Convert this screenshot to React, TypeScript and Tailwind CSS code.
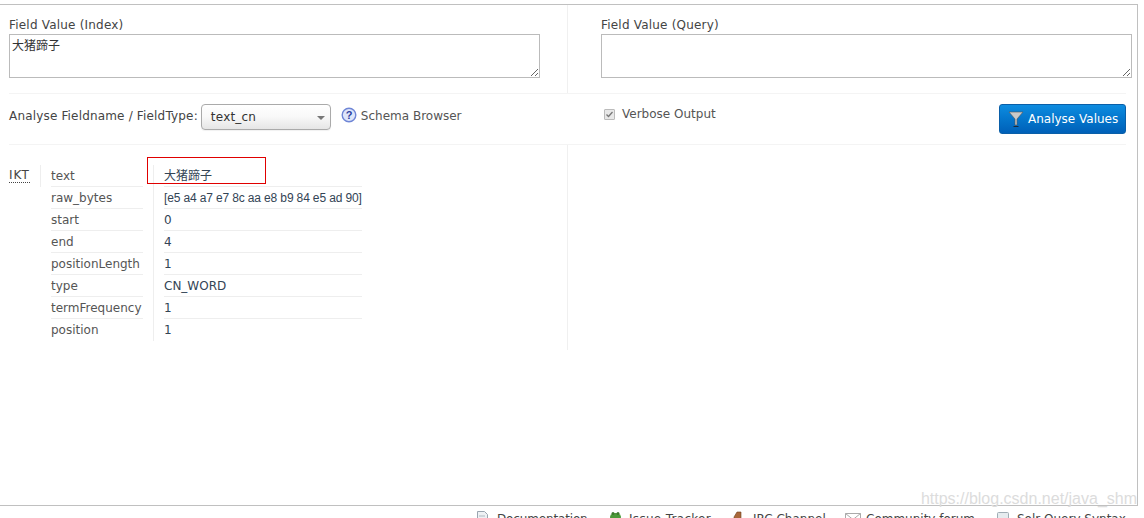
import React from "react";

const font = "font-['DejaVu_Sans','Noto_Sans_CJK_SC',sans-serif]";

const rows: [string, string][] = [
  ["text", "大猪蹄子"],
  ["raw_bytes", "[e5 a4 a7 e7 8c aa e8 b9 84 e5 ad 90]"],
  ["start", "0"],
  ["end", "4"],
  ["positionLength", "1"],
  ["type", "CN_WORD"],
  ["termFrequency", "1"],
  ["position", "1"],
];

function Field({ label, value }: { label: string; value?: string }) {
  return (
    <div className="flex flex-col">
      <label className="h-[17px] text-[12px] leading-[17px] tracking-[0.2px] text-[#444]">{label}</label>
      <textarea
        readOnly
        value={value ?? ""}
        className="block h-[44px] w-[531px] border border-[#bbb] bg-white px-[2px] pb-[2px] pt-[3px] text-[12px] leading-[16px] text-[#333] outline-none"
      />
    </div>
  );
}

function FooterLink({ w, icon, label, tracking }: { w: string; icon: React.ReactNode; label: string; tracking?: string }) {
  return (
    <div className={`flex shrink-0 items-start gap-[6px] ${w}`}>
      <span className="h-[14px] w-[15px] shrink-0">{icon}</span>
      <span className={`whitespace-nowrap pt-[1px] text-[12px] leading-[14px] text-[#444] ${tracking ?? ""}`}>{label}</span>
    </div>
  );
}

export default function App() {
  return (
    <div className={`relative h-[518px] w-[1144px] overflow-hidden bg-white ${font}`}>
      <div className="mt-[4px] flex h-[502px] w-[1138px] flex-col border-b border-r border-t border-[#c0c0c0]">
        {/* Fields */}
        <div className="ml-[9px] flex h-[89px] w-[1117px] shrink-0 border-b border-[#f4f4f4]">
          <div className="w-[559px] shrink-0 border-r border-[#f0f0f0] pt-[12px]">
            <Field label="Field Value (Index)" value="大猪蹄子" />
          </div>
          <div className="shrink-0 pl-[33px] pt-[12px]">
            <Field label="Field Value (Query)" />
          </div>
        </div>

        {/* Controls */}
        <div className="ml-[9px] flex h-[51px] w-[1117px] shrink-0 border-b border-[#f4f4f4]">
          <div className="flex w-[559px] shrink-0 items-start pt-[10px]">
            <span className="mt-[4px] text-[12px] leading-[17px] tracking-[0.17px] text-[#444]">Analyse Fieldname / FieldType:</span>
            <div className="ml-[3px] flex h-[26px] w-[130px] items-center justify-between rounded-[4px] border border-[#aaa] bg-gradient-to-b from-white via-[#f8f8f8] to-[#e6e6e6] pl-[9px] pr-[5px] shadow-[0_1px_1px_rgba(0,0,0,0.06)]">
              <span className="text-[12px] tracking-[0.2px] text-[#333]">text_cn</span>
              <span className="mt-[2px] h-0 w-0 border-x-[4px] border-t-[4px] border-x-transparent border-t-[#777]" />
            </div>
            <svg width="16" height="16" viewBox="0 0 16 16" className="ml-[10px] mt-[3px]">
              <circle cx="8" cy="8" r="6.8" fill="#dfe6fa" stroke="#6f86d6" strokeWidth="1.4" />
              <text x="8" y="12" textAnchor="middle" fontSize="11" fontWeight="700" fill="#2d3f9e" fontFamily="Liberation Sans">?</text>
            </svg>
            <span className="ml-[4px] mt-[4px] text-[12px] leading-[17px] text-[#555]">Schema Browser</span>
          </div>
          <div className="flex flex-1 items-start justify-between pt-[10px]">
            <div className="ml-[36px] mt-[2px] flex items-center">
              <span className="flex h-[11px] w-[11px] items-center justify-center rounded-[1px] border border-[#bbb] bg-[#e8e8e8]">
                <svg width="9" height="9" viewBox="0 0 9 9">
                  <path d="M1.5 4.5 L3.5 6.5 L7.5 2" fill="none" stroke="#777" strokeWidth="1.3" />
                </svg>
              </span>
              <span className="ml-[7px] text-[12px] leading-[17px] text-[#555]">Verbose Output</span>
            </div>
            <div className="flex h-[30px] w-[127px] items-center rounded-[3px] border border-[#0a5fa8] bg-gradient-to-b from-[#0e8ce0] to-[#0060b8] pl-[8px]">
              <svg width="16" height="18" viewBox="0 0 16 18">
                <path d="M1 2 H15 L9 9 V15 H7 V9 Z" fill="#c9c9c9" stroke="#555" strokeWidth="0.6" />
                <path d="M5.5 16.5 H10.5" stroke="#1c2a3a" strokeWidth="1" />
              </svg>
              <span className="ml-[4px] text-[12px] text-white">Analyse Values</span>
            </div>
          </div>
        </div>

        {/* Result */}
        <div className="ml-[9px] flex h-[205px] w-[559px] shrink-0 border-r border-[#f0f0f0] pt-[20px]">
          <div className="flex h-[22px] w-[32px] items-start border-r border-[#eee] pt-[3px]">
            <span className="border-b border-dotted border-[#444] text-[12px] leading-[14px] tracking-[1px] text-[#444]">IKT</span>
          </div>
          <div className="ml-[10px]">
            {rows.map(([k]) => (
              <div key={k} className="h-[22px] w-[92px] border-b border-[#eee] text-[12px] leading-[22px] text-[#555] last:border-b-0">
                {k}
              </div>
            ))}
          </div>
          <div className="ml-[10px] h-[176px] border-l border-[#eee] pl-[10px]">
            {rows.map(([k, v]) => (
              <div
                key={k}
                className={`h-[22px] w-[198px] whitespace-nowrap border-b border-[#eee] text-[12px] leading-[22px] text-[#345] last:border-b-0 ${
                  k === "raw_bytes" ? "font-['Liberation_Sans',sans-serif] tracking-[-0.14px]" : ""
                }`}
              >
                {v}
              </div>
            ))}
          </div>
        </div>
      </div>

      {/* Footer */}
      <div className="ml-[476px] mt-[5px] flex">
        <FooterLink w="w-[132px]" label="Documentation" tracking="tracking-[-0.15px]" icon={
          <svg width="13" height="14" viewBox="0 0 13 14"><path d="M1.5.5h7l3 3v10h-10z" fill="#eef1f4" stroke="#9aa5b0" /><path d="M3 5h6" stroke="#b0bac2" /></svg>} />
        <FooterLink w="w-[124px]" label="Issue Tracker" tracking="tracking-[0.3px]" icon={
          <svg width="15" height="14" viewBox="0 0 15 14"><ellipse cx="7.5" cy="6" rx="5.5" ry="4" fill="#4c9a3a" /><circle cx="5" cy="2.5" r="1.5" fill="#3d7a2e" /><circle cx="10" cy="2.5" r="1.5" fill="#3d7a2e" /></svg>} />
        <FooterLink w="w-[113px]" label="IRC Channel" icon={
          <svg width="13" height="14" viewBox="0 0 13 14"><path d="M2 6 L5 1 H9 V12 H2 Z" fill="#a9683a" stroke="#6e3f1e" strokeWidth="0.6" /></svg>} />
        <FooterLink w="w-[151px]" label="Community forum" icon={
          <svg width="16" height="14" viewBox="0 0 16 14"><path d="M.5 2.5h15v10H.5z M.5 2.5l7.5 6 7.5-6" fill="#fff" stroke="#aaa" /></svg>} />
        <FooterLink w="w-[140px]" label="Solr Query Syntax" icon={
          <svg width="14" height="14" viewBox="0 0 14 14"><rect x="1.5" y="1.5" width="11" height="12" rx="1" fill="#e6ecef" stroke="#a0adb5" /></svg>} />
      </div>

      {/* Annotation box drawn over the screenshot */}
      <div className="absolute left-[147px] top-[157px] h-[27px] w-[119px] border border-[#e00000]" />
      {/* Watermark */}
      <div className="absolute right-[7px] top-[489px] font-['Liberation_Sans',sans-serif] text-[16px] leading-[20px] text-[#dcdcdc]">
        https://blog.csdn.net/java_shm
      </div>
    </div>
  );
}
